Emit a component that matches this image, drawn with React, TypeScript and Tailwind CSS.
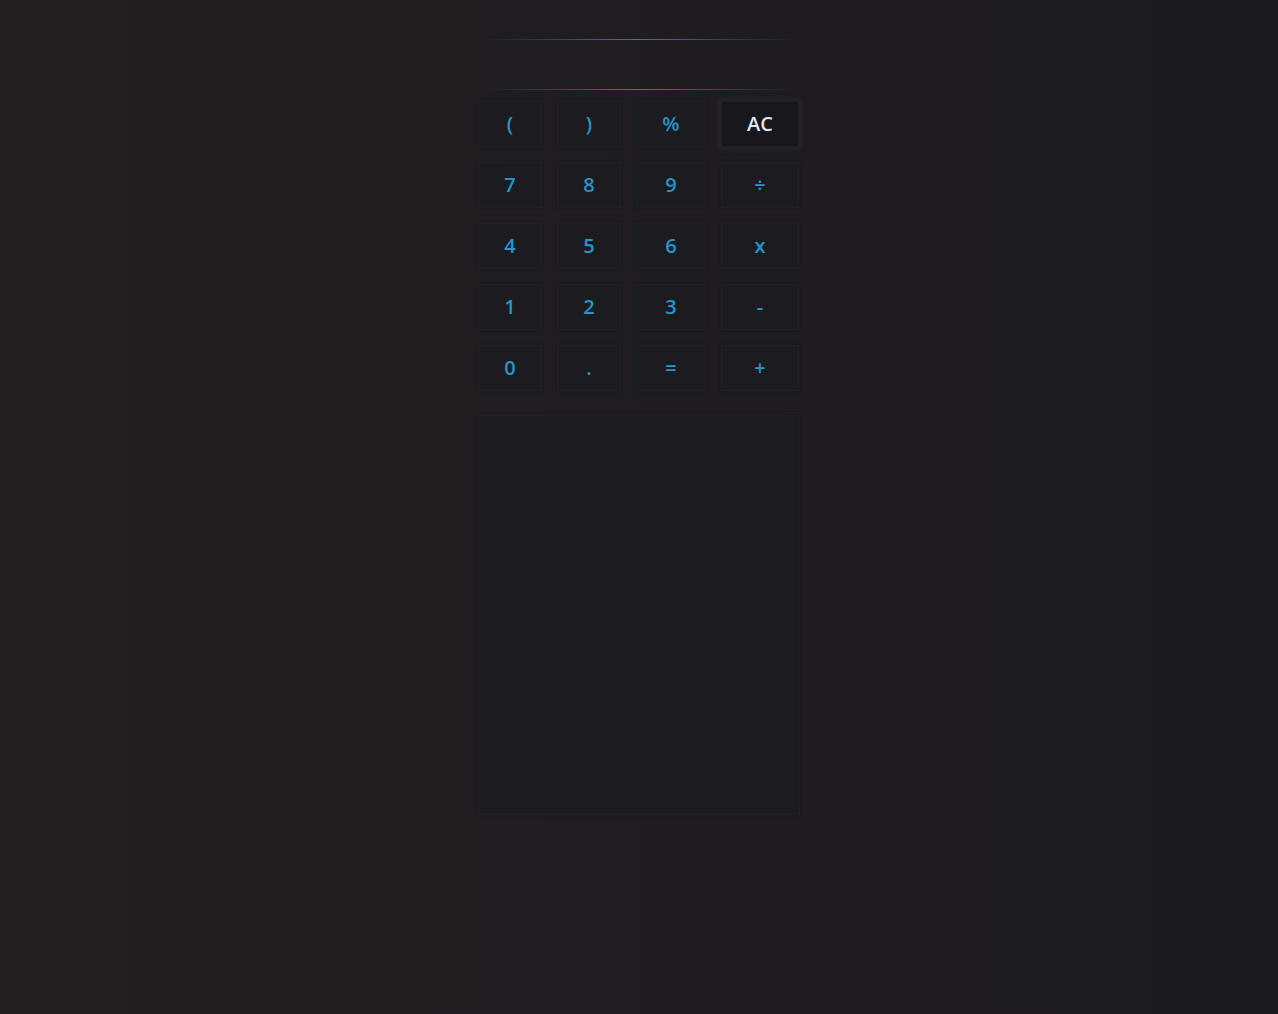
import React from "react";

const keys = ["(", ")", "%", "AC", "7", "8", "9", "÷", "4", "5", "6", "x", "1", "2", "3", "-", "0", ".", "=", "+"];

export default function App() {
  return (
    <div className="min-h-[1014px] w-full bg-gradient-to-r from-[#231f20] to-[#1b1a1f]" style={{ fontFamily: '"Open Sans", "Noto Sans", sans-serif' }}>
      <div className="mx-auto w-[322px] pt-[39px]">
        <div className="mx-[7px] h-px bg-gradient-to-r from-transparent via-[#2f7fa6] to-transparent" />
        <div className="h-[49px]" />
        <div className="mx-[7px] h-px bg-gradient-to-r from-transparent via-[#2f7fa6] to-transparent" />
        <div className="mt-[11px] grid grid-cols-[64px_64px_70px_78px] auto-rows-[46px] gap-[15px]">
          {keys.map((k) => (
            <button
              key={k}
              className={
                k === "AC"
                  ? "flex items-center justify-center border border-[#202024] bg-[#18171b] text-[20px] font-semibold text-[#dfe6f2] shadow-[0_0_5px_2px_rgba(40,40,46,0.9)]"
                  : "flex items-center justify-center border border-[#1e2125] bg-[#1c1b1f] text-[20px] font-semibold text-[#2596c9] shadow-[0_0_3px_rgba(0,0,0,0.25)]"
              }
            >
              {k}
            </button>
          ))}
        </div>
        <div className="mt-[24px] h-[400px] border border-[#1e2125] bg-[#1c1b1f] shadow-[0_0_3px_rgba(0,0,0,0.25)]" />
      </div>
    </div>
  );
}
